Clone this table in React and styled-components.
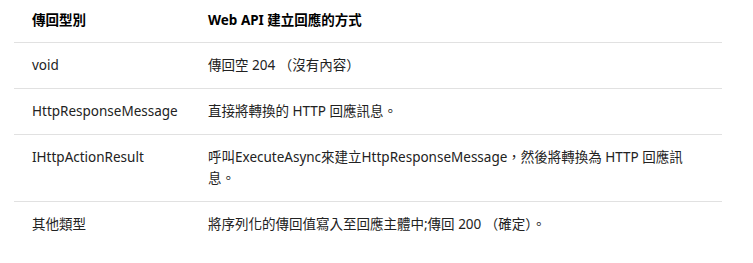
import React from "react";
import styled, { createGlobalStyle } from "styled-components";

const Global = createGlobalStyle`
  html, body { margin: 0; padding: 0; background: #fff; }
  body {
    font-family: "Segoe UI", "Noto Sans", "Noto Sans CJK TC", sans-serif;
    font-size: 13.5px;
    color: #222;
  }
`;

const Wrap = styled.div`
  padding: 0 31px 0 14px;
`;

const Table = styled.table`
  width: 708px;
  border-collapse: collapse;
  table-layout: fixed;
`;

const Head = styled.th`
  text-align: left;
  font-weight: 700;
  color: #000;
  line-height: 21px;
  padding: 10px 18px 11px;
  border-bottom: 1px solid #e1e1e1;
  width: ${(p) => p.$w || "auto"};
`;

const Cell = styled.td`
  line-height: 21px;
  padding: 12px 18px;
  vertical-align: top;
  border-bottom: ${(p) => (p.$last ? "none" : "1px solid #e1e1e1")};
`;

const rows = [
  ["void", "傳回空 204 （沒有內容）"],
  ["HttpResponseMessage", "直接將轉換的 HTTP 回應訊息。"],
  ["IHttpActionResult", "呼叫ExecuteAsync來建立HttpResponseMessage，然後將轉換為 HTTP 回應訊息。"],
  ["其他類型", "將序列化的傳回值寫入至回應主體中;傳回 200 （確定）。"],
];

export default function App() {
  return (
    <Wrap>
      <Global />
      <Table>
        <thead>
          <tr>
            <Head $w="140px">傳回型別</Head>
            <Head>Web API 建立回應的方式</Head>
          </tr>
        </thead>
        <tbody>
          {rows.map(([a, b], i) => (
            <tr key={a}>
              <Cell $last={i === rows.length - 1}>{a}</Cell>
              <Cell $last={i === rows.length - 1}>{b}</Cell>
            </tr>
          ))}
        </tbody>
      </Table>
    </Wrap>
  );
}
